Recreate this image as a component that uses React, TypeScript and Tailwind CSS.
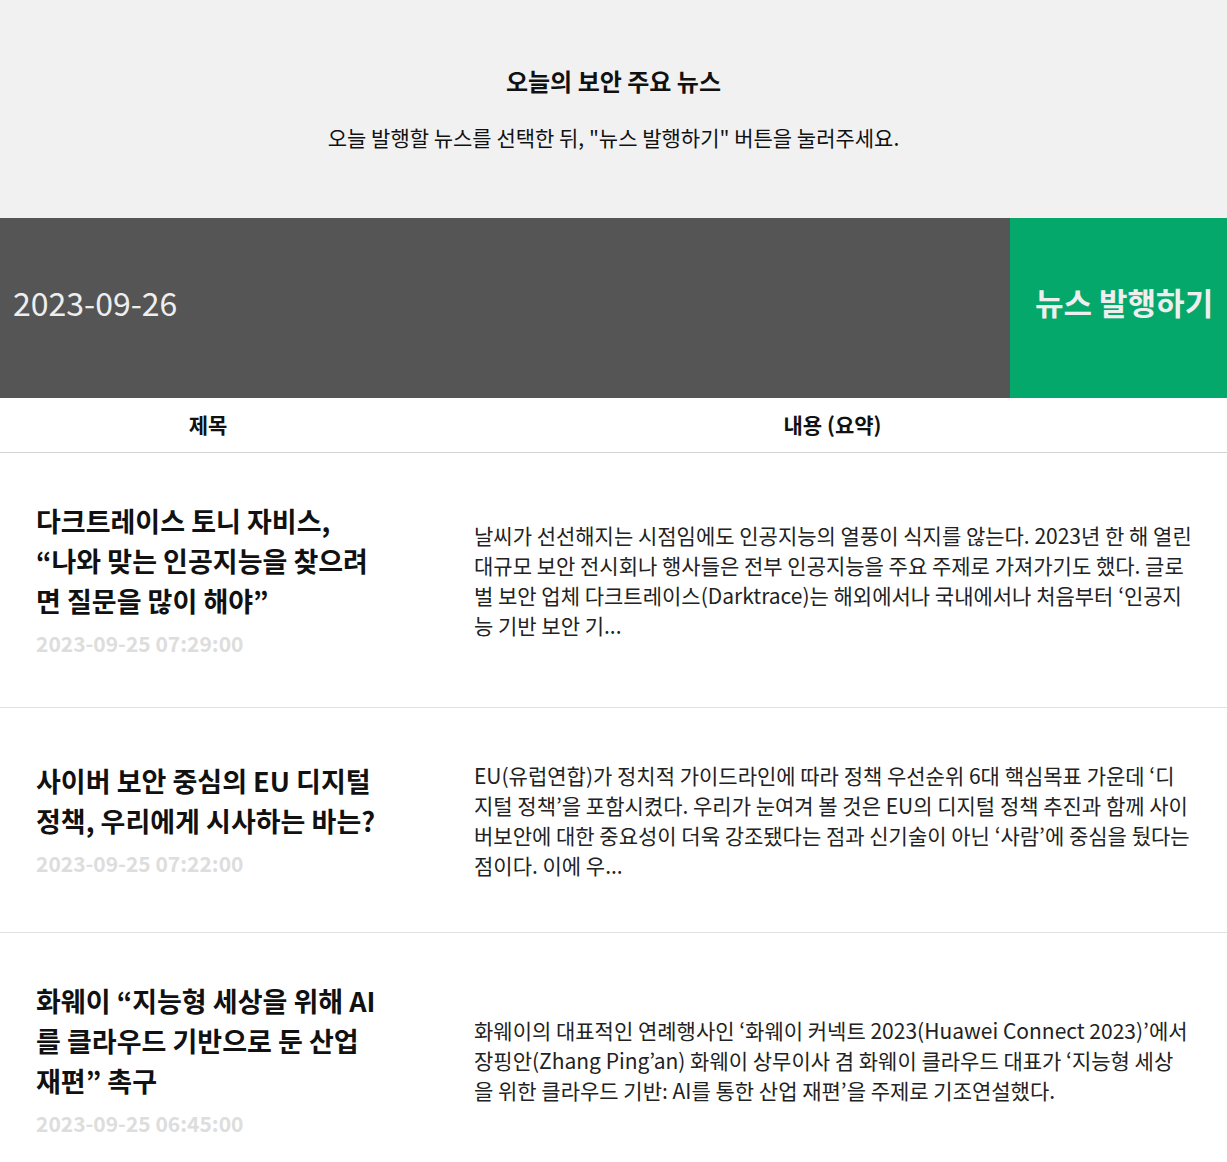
import React from 'react';

const news = [
  {
    title: '다크트레이스 토니 자비스, “나\u2060와 맞는 인공지능을 찾으려면 질문을 많이 해야”',
    date: '2023-09-25 07:29:00',
    summary:
      '날씨가 선선해지는 시점임에도 인공지능의 열풍이 식지를 않는다. 2023년 한 해 열린 대규모 보안 전시회나 행사들은 전부 인공지능을 주요 주제로 가져가기도 했다. 글로벌 보안 업체 다크트레이스(Darktrace)는 해외에서나 국내에서나 처음부터 ‘인공지능 기반 보안 기...',
  },
  {
    title: '사이버 보안 중심의 EU 디지털 정책, 우리에게 시사하는 바는?',
    date: '2023-09-25 07:22:00',
    summary:
      'EU(유럽연합)가 정치적 가이드라인에 따라 정책 우선순위 6대 핵심목표 가운데 ‘디지털 정책’을 포함시켰다. 우리가 눈여겨 볼 것은 EU의 디지털 정책 추진과 함께 사이버보안에 대한 중요성이 더욱 강조됐다는 점과 신기술이 아닌 ‘사람’에 중심을 뒀다는 점이다. 이에 우...',
  },
  {
    title: '화웨이 “지능형 세상을 위해 AI를 클라우드 기반으로 둔 산업 재편” 촉구',
    date: '2023-09-25 06:45:00',
    summary:
      '화웨이의 대표적인 연례행사인 ‘화웨이 커넥트 2023(Huawei Connect 2023)’에서 장핑안(Zhang Ping’an) 화웨이 상무이사 겸 화웨이 클라우드 대표가 ‘지능형 세상을 위한 클라우드 기반: AI를 통한 산업 재편’을 주제로 기조연설했다.',
  },
];

const App = () => {
  return (
    <div className="min-h-screen bg-white text-[#111] font-['Noto_Sans_CJK_KR','Noto_Sans',sans-serif]">
      <header className="h-[218px] bg-[#f1f1f1] flex flex-col items-center pt-[61px]">
        <h1 className="text-[24px] font-bold leading-[40px]">오늘의 보안 주요 뉴스</h1>
        <p className="mt-[20px] text-[21px] leading-[32px]">
          오늘 발행할 뉴스를 선택한 뒤, "뉴스 발행하기" 버튼을 눌러주세요.
        </p>
      </header>

      <div className="h-[180px] flex">
        <div className="flex-1 bg-[#555555] flex items-center pl-[13px] pb-[12px]">
          <span className="text-[32px] text-[#eeeeee]">2023-09-26</span>
        </div>
        <button className="w-[217px] bg-[#05a86b] text-[#eeeeee] text-[31px] font-bold flex items-center pl-[25px] pb-[12px] whitespace-nowrap">
          뉴스 발행하기
        </button>
      </div>

      <div className="flex h-[55px] items-center border-b border-[#d4d4d4] text-[21px] font-bold">
        <div className="w-[416px] text-center">제목</div>
        <div className="flex-1 pl-[58px] pr-9 text-center">내용 (요약)</div>
      </div>

      {news.map((item) => (
        <div key={item.date} className="flex items-center border-b border-[#e2e2e2] py-[48px]">
          <div className="w-[416px] pl-9 pr-[37px] shrink-0">
            <h2 className="text-[27px] font-bold leading-[40px]">{item.title}</h2>
            <div className="pt-[6px] text-[21px] font-bold leading-[32px] text-[#dddddd]">{item.date}</div>
          </div>
          <p className="flex-1 pl-[58px] pr-[35px] py-[4px] text-[21px] leading-[30px] text-[#222]">
            {item.summary}
          </p>
        </div>
      ))}
    </div>
  );
};

export default App;
